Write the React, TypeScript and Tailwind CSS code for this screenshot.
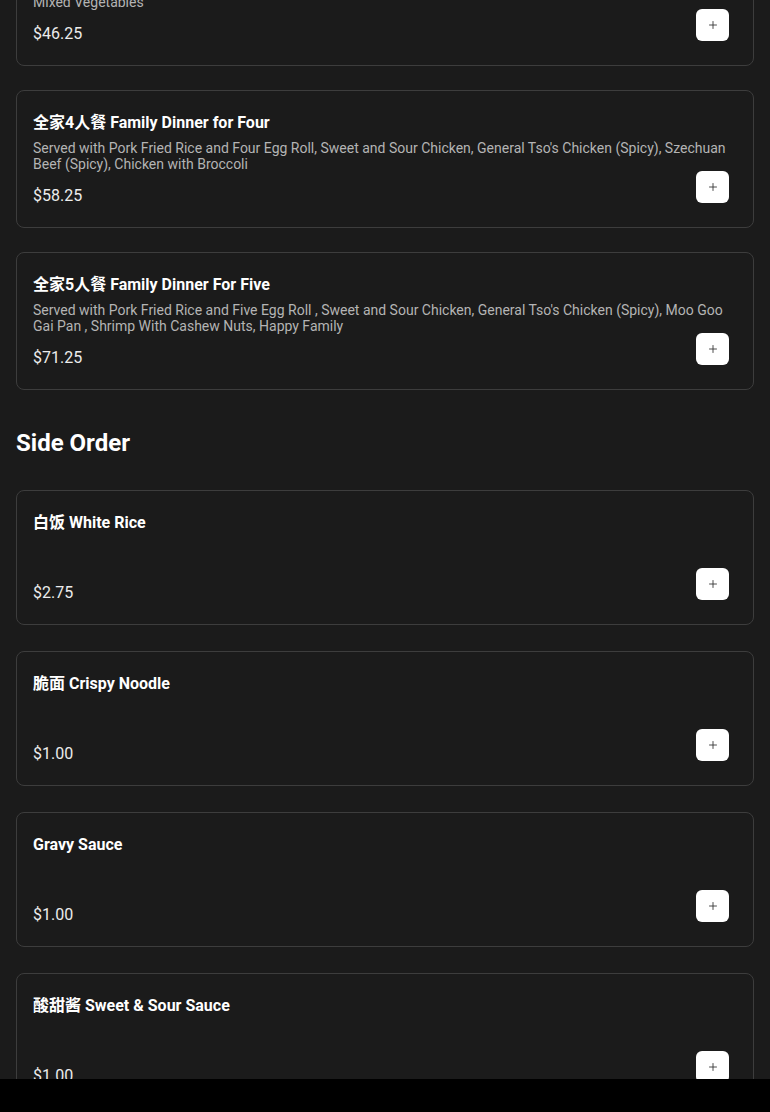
import { Plus } from "lucide-react";

interface MenuItem {
  name: string;
  description?: string;
  price: string;
}

const FAMILY_DINNERS: MenuItem[] = [
  {
    name: "全家3人餐 Family Dinner for Three",
    description:
      "Served with Pork Fried Rice and Three Egg Roll, Sweet and Sour Chicken, General Tso's Chicken (Spicy), Beef & Mixed Vegetables",
    price: "$46.25",
  },
  {
    name: "全家4人餐 Family Dinner for Four",
    description:
      "Served with Pork Fried Rice and Four Egg Roll, Sweet and Sour Chicken, General Tso's Chicken (Spicy), Szechuan Beef (Spicy), Chicken with Broccoli",
    price: "$58.25",
  },
  {
    name: "全家5人餐 Family Dinner For Five",
    description:
      "Served with Pork Fried Rice and Five Egg Roll , Sweet and Sour Chicken, General Tso's Chicken (Spicy), Moo Goo Gai Pan , Shrimp With Cashew Nuts, Happy Family",
    price: "$71.25",
  },
];

const SIDE_ORDERS: MenuItem[] = [
  { name: "白饭 White Rice", price: "$2.75" },
  { name: "脆面 Crispy Noodle", price: "$1.00" },
  { name: "Gravy Sauce", price: "$1.00" },
  { name: "酸甜酱 Sweet & Sour Sauce", price: "$1.00" },
];

function ItemCard({ item }: { item: MenuItem }) {
  return (
    <div className="relative flex flex-col rounded-lg border border-[#3d3d3d] bg-[#1b1b1b] px-4 pt-[17px] pb-[19px]">
      <h3 className="mt-px text-base font-bold leading-7 text-white">{item.name}</h3>
      {item.description ? (
        <p className="mt-[3px] line-clamp-2 min-h-8 text-sm leading-4 text-[#b4b4b4]">
          {item.description}
        </p>
      ) : (
        <div className="mt-[3px] h-[29px]" />
      )}
      <p className="mt-3 text-base leading-6 text-[#ececec]">{item.price}</p>
      <button
        type="button"
        aria-label={`Add ${item.name}`}
        className="absolute right-6 bottom-6 flex h-8 w-[33px] items-center justify-center rounded-md bg-white text-[#333]"
      >
        <Plus size={12} strokeWidth={1.75} />
      </button>
    </div>
  );
}

export default function App() {
  return (
    <div
      className="min-h-screen bg-[#1b1b1b] text-white"
      style={{ fontFamily: 'Roboto, "Noto Sans CJK SC", sans-serif' }}
    >
      <div className="-mt-[72px] px-4 pb-16">
        {/* Family dinners */}
        <div className="flex flex-col gap-6">
          {FAMILY_DINNERS.map((item) => (
            <ItemCard key={item.name} item={item} />
          ))}
        </div>

        {/* Side Order */}
        <h2 className="mt-[37px] mb-[31px] text-2xl font-bold leading-8 text-white">Side Order</h2>
        <div className="flex flex-col gap-[26px]">
          {SIDE_ORDERS.map((item) => (
            <ItemCard key={item.name} item={item} />
          ))}
        </div>
      </div>

      {/* bottom bar */}
      <div className="fixed inset-x-0 bottom-0 h-[33px] bg-black" />
    </div>
  );
}
